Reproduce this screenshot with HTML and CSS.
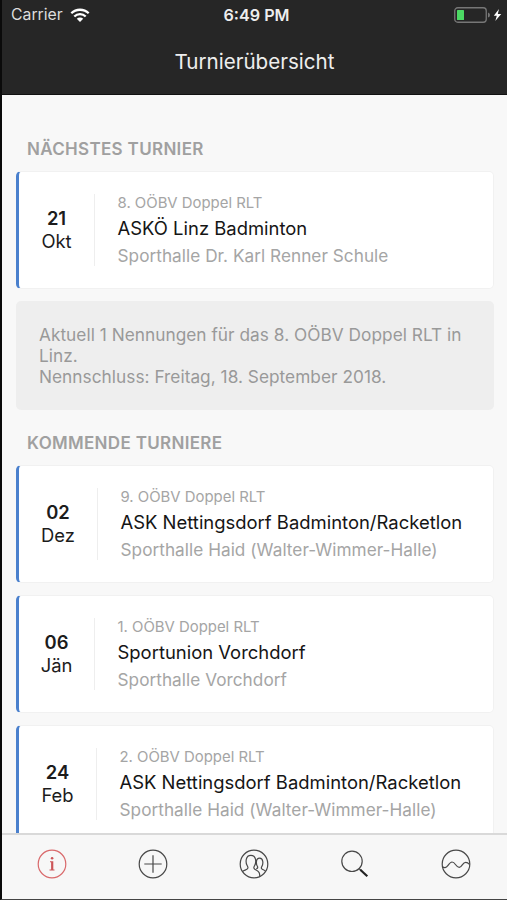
FILE: index.html
```html
<!DOCTYPE html>
<html lang="de">
<head>
<meta charset="utf-8">
<title>Turnierübersicht</title>
<link rel="stylesheet" href="styles.css">
</head>
<body>
<div class="phone">
  <header class="header">
    <div class="status">
      <div class="status-left">
        <span class="carrier">Carrier</span>
        <svg class="wifi" width="20" height="15" viewBox="0 0 20 15" fill="none" stroke="#fff" stroke-width="2.3"><path d="M1.3 5.3a12.4 12.4 0 0 1 17.4 0M4.3 8.5a8.1 8.1 0 0 1 11.4 0"/><path d="M10 14 6.8 10.8a4.6 4.6 0 0 1 6.4 0z" fill="#fff" stroke="none"/></svg>
      </div>
      <span class="clock">6:49 PM</span>
      <div class="status-right">
        <svg width="48" height="16" viewBox="0 0 48 16"><rect x=".75" y=".75" width="31.5" height="14.500" rx="3" fill="none" stroke="#777" stroke-width="1.3"/><rect x="3" y="3" width="7" height="10" rx=".6" fill="#4cd964"/><path d="M34 5.500q2 .5 2 2.500t-2 2.500z" fill="#777"/><path d="M45 2 39.800 8.700h3L41.300 14 47.200 7h-3.400z" fill="#fff"/></svg>
      </div>
    </div>
    <h1 class="title">Turnierübersicht</h1>
  </header>
  <main class="content">
    <h2 class="section">Nächstes Turnier</h2>
    <article class="card">
      <div class="date"><b>21</b><span>Okt</span></div>
      <div class="details"><p class="series">8. OÖBV Doppel RLT</p><p class="club">ASKÖ Linz Badminton</p><p class="hall">Sporthalle Dr. Karl Renner Schule</p></div>
    </article>
    <div class="notice">Aktuell 1 Nennungen für das 8. OÖBV Doppel RLT in Linz.<br>Nennschluss: Freitag, 18. September 2018.</div>
    <h2 class="section">Kommende Turniere</h2>
    <article class="card">
      <div class="date dez"><b>02</b><span>Dez</span></div>
      <div class="details"><p class="series">9. OÖBV Doppel RLT</p><p class="club">ASK Nettingsdorf Badminton/Racketlon</p><p class="hall">Sporthalle Haid (Walter-Wimmer-Halle)</p></div>
    </article>
    <article class="card">
      <div class="date jan"><b>06</b><span>Jän</span></div>
      <div class="details"><p class="series">1. OÖBV Doppel RLT</p><p class="club">Sportunion Vorchdorf</p><p class="hall">Sporthalle Vorchdorf</p></div>
    </article>
    <article class="card">
      <div class="date feb"><b>24</b><span>Feb</span></div>
      <div class="details"><p class="series">2. OÖBV Doppel RLT</p><p class="club">ASK Nettingsdorf Badminton/Racketlon</p><p class="hall">Sporthalle Haid (Walter-Wimmer-Halle)</p></div>
    </article>
  </main>
  <nav class="tabs">
    <a class="tab active"><svg viewBox="0 0 30 30"><circle cx="15" cy="15" r="13.800"/><path class="solid" d="M13 12.300h3.300v8.300h1.200v1h-5v-1h1.600v-7.300H13z"/><circle class="solid" cx="15.100" cy="9.200" r="1.300"/></svg></a>
    <a class="tab"><svg viewBox="0 0 30 30"><circle cx="15" cy="15" r="13.800"/><path d="M15 6.300v17.400M6.300 15h17.400"/></svg></a>
    <a class="tab"><svg viewBox="0 0 30 30"><circle cx="15" cy="15" r="13.800"/><path d="M3.600 22.500c1.600-1.500 4.800-1.400 5.300-3.300.3-1.200-.3-1.900-.9-3C6.600 13.500 6.300 6.300 11.900 6.300s5.300 7.200 3.900 9.900c-.6 1.100-1.200 1.800-.9 3 .5 1.900 4.300 1.800 5.300 4.500.5 1.300.6 2.500.5 3.700M17.300 19.800c1.300-.5 1.700-1.200 1.200-2.300-1.500-2.100-2-8.300 2.100-8.300s3.600 6.200 2.300 8.100c-.6.9-.7 1.500-.4 2.200.5 1.200 2.700 1.200 3.900 2.600"/></svg></a>
    <a class="tab"><svg viewBox="0 0 30 30"><circle cx="12" cy="12.300" r="10.200"/><path d="m19 19.500 2 2"/><path class="handle" d="m20.300 20.800 7 6.500"/></svg></a>
    <a class="tab"><svg viewBox="0 0 30 30"><circle cx="15" cy="15" r="13.800"/><path d="M1.300 17.500c1.800 1.800 3.800 1.500 5.500-.8 1.800-2.500 2.600-3.700 4.200-3.700 3.400 0 3.900 5.400 7.200 5.400 3 0 3.200-5.100 6.500-5.100 1.600 0 2.800.9 3.800 2.200"/></svg></a>
  </nav>
</div>
</body>
</html>
```

FILE: styles.css
```css
* { box-sizing: border-box; margin: 0; padding: 0; }
body { font-family: Inter, "Liberation Sans", sans-serif; background: #f8f8f8; }
.phone { display: flex; flex-direction: column; height: 900px; overflow: hidden; border-left: 2px solid #0a0a0a; border-bottom: 1px solid #444; }
.header { flex: none; height: 95px; background: #262626; color: #fff; border-bottom: 1px solid #111; }
.status { display: grid; grid-template-columns: 1fr auto 1fr; align-items: center; height: 30px; padding: 0 5px 0 9px; }
.status-left { display: flex; align-items: center; gap: 7px; }
.carrier { font-size: 15.800px; line-height: 20px; color: #ddd; }
.clock { font-size: 16.200px; font-weight: 600; color: #eee; }
.status-right { display: flex; justify-content: flex-end; }
.title { height: 64px; line-height: 63px; text-align: center; font-size: 20.600px; font-weight: 400; color: #eee; }
.content { flex: 1; min-height: 0; overflow: hidden; padding: 43px 13px 0 14px; }
.section { padding: 0 11px; height: 33px; line-height: 22px; font-size: 17px; font-weight: 600; letter-spacing: .32px; color: #a0a0a0; text-transform: uppercase; }
.card { display: flex; align-items: center; height: 118px; margin-bottom: 12px; padding-left: 20px; background: #fff; border: 1px solid #f1f1f1; border-left: 3px solid #4a80cd; border-radius: 5px; }
.date { display: flex; flex-direction: column; align-items: center; justify-content: center; width: 56px; height: 72px; padding-right: 20px; border-right: 1px solid #eee; font-size: 18.400px; line-height: 23px; color: #1c1c1c; }
.date b { font-weight: 600; }
.dez { width: 59px; }
.feb { width: 58px; }
.details { padding-left: 22.500px; white-space: nowrap; }
.series { font-size: 14.900px; line-height: 22px; color: #a5a5a5; }
.club { font-size: 18.450px; line-height: 29px; color: #151515; }
.hall { font-size: 17.200px; line-height: 26px; letter-spacing: .04px; color: #a5a5a5; }
.notice { height: 109px; margin-bottom: 22px; padding: 22.500px 20px 0 23px; background: #eee; border-radius: 5px; font-size: 17.250px; line-height: 21.300px; letter-spacing: .03px; color: #999; }
.tabs { flex: none; display: grid; grid-template-columns: repeat(5, 1fr); height: 66px; padding-right: 1px; background: #f7f7f7; border-top: 2px solid #d9d9d9; }
.tab { display: flex; justify-content: center; padding-top: 14px; }
.tab svg { width: 30px; height: 30px; fill: none; stroke: #484848; stroke-width: 1.200; }
.tab .solid { fill: #484848; stroke: none; }
.tab .handle { stroke: #222; stroke-width: 2.200; }
.active svg { stroke: #d9696b; }
.active .solid { fill: #cc5558; }
```
